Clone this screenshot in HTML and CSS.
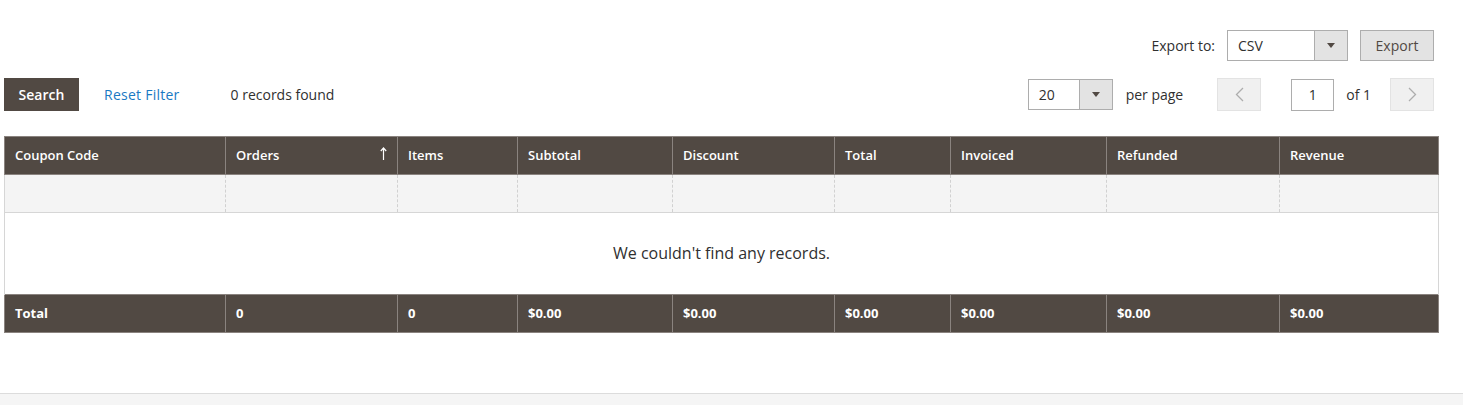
FILE: index.html
```html
<!DOCTYPE html>
<html>
<head>
<meta charset="utf-8">
<link rel="stylesheet" href="styles.css">
</head>
<body>
<div class="page">
  <div class="export-bar">
    <span class="export-label">Export to:</span>
    <div class="select select-csv">
      <span class="select-value">CSV</span>
      <span class="select-arrow"><svg width="8" height="5" viewBox="0 0 8 5"><path d="M0 0h8L4 5z" fill="#514943"/></svg></span>
    </div>
    <button class="btn-export">Export</button>
  </div>

  <div class="toolbar">
    <div class="toolbar-left">
      <button class="btn-search">Search</button>
      <a class="reset-link">Reset Filter</a>
      <span class="records">0 records found</span>
    </div>
    <div class="toolbar-right">
      <div class="select select-limit">
        <span class="select-value">20</span>
        <span class="select-arrow"><svg width="8" height="5" viewBox="0 0 8 5"><path d="M0 0h8L4 5z" fill="#514943"/></svg></span>
      </div>
      <span class="per-page">per page</span>
      <button class="pager-btn prev"><svg width="9" height="15" viewBox="0 0 9 15"><path d="M8 1L1.5 7.5 8 14" fill="none" stroke="#adadad" stroke-width="1.3"/></svg></button>
      <div class="page-input">1</div>
      <span class="of-pages">of 1</span>
      <button class="pager-btn next"><svg width="9" height="15" viewBox="0 0 9 15"><path d="M1 1l6.5 6.5L1 14" fill="none" stroke="#adadad" stroke-width="1.3"/></svg></button>
    </div>
  </div>

  <table class="grid">
    <colgroup>
      <col class="c1"><col class="c2"><col class="c3"><col class="c4"><col class="c5"><col class="c6"><col class="c7"><col class="c8"><col class="c9">
    </colgroup>
    <thead>
      <tr class="head">
        <th>Coupon Code</th>
        <th class="sorted">Orders<span class="sort-arrow"><svg width="7" height="13" viewBox="0 0 7 13"><path d="M3.5 1v12M0.8 4L3.5 1 6.2 4" fill="none" stroke="#ffffff" stroke-width="1.2"/></svg></span></th>
        <th>Items</th>
        <th>Subtotal</th>
        <th>Discount</th>
        <th>Total</th>
        <th>Invoiced</th>
        <th>Refunded</th>
        <th>Revenue</th>
      </tr>
      <tr class="filters">
        <td></td><td></td><td></td><td></td><td></td><td></td><td></td><td></td><td></td>
      </tr>
    </thead>
    <tbody>
      <tr class="empty">
        <td colspan="9">We couldn't find any records.</td>
      </tr>
    </tbody>
    <tfoot>
      <tr class="totals">
        <td>Total</td>
        <td>0</td>
        <td>0</td>
        <td>$0.00</td>
        <td>$0.00</td>
        <td>$0.00</td>
        <td>$0.00</td>
        <td>$0.00</td>
        <td>$0.00</td>
      </tr>
    </tfoot>
  </table>
</div>
<footer class="footer"></footer>
</body>
</html>
```

FILE: styles.css
```css
html, body {
  margin: 0;
  padding: 0;
  background: #ffffff;
}
body {
  font-family: "Open Sans", "Liberation Sans", sans-serif;
  color: #303030;
  font-size: 14px;
  width: 1463px;
  height: 405px;
  overflow: hidden;
}
.page {
  height: 393px;
  padding: 0 25px 0 4px;
  box-sizing: border-box;
}
button {
  font-family: inherit;
  cursor: pointer;
}

/* export bar */
.export-bar {
  display: flex;
  justify-content: flex-end;
  align-items: center;
  padding-top: 30px;
  padding-right: 4px;
  height: 31px;
  box-sizing: content-box;
}
.export-label {
  font-size: 14px;
  color: #303030;
  margin-right: 12px;
}
.select {
  display: flex;
  border: 1px solid #adadad;
  background: #fff;
  box-sizing: border-box;
}
.select-csv {
  width: 121px;
  height: 31px;
}
.select-value {
  flex: 1;
  display: flex;
  align-items: center;
  padding-left: 10px;
  font-size: 14px;
  color: #303030;
}
.select-arrow {
  width: 32px;
  background: #e3e3e3;
  border-left: 1px solid #adadad;
  display: flex;
  align-items: center;
  justify-content: center;
}
.btn-export {
  margin-left: 12px;
  width: 74px;
  height: 31px;
  background: #e3e3e3;
  border: 1px solid #adadad;
  color: #514943;
  font-size: 14px;
  padding: 0;
}

/* toolbar */
.toolbar {
  display: flex;
  justify-content: space-between;
  align-items: center;
  margin-top: 17px;
  height: 33px;
  padding-right: 4px;
}
.toolbar-left {
  display: flex;
  align-items: center;
}
.btn-search {
  width: 75px;
  height: 33px;
  background: #514943;
  border: 1px solid #514943;
  color: #ffffff;
  font-size: 14px;
  font-weight: 600;
  padding: 0;
}
.reset-link {
  margin-left: 25px;
  color: #1979c3;
  font-size: 14px;
  letter-spacing: 0.25px;
}
.records {
  margin-left: 51px;
  font-size: 14px;
  color: #303030;
}
.toolbar-right {
  display: flex;
  align-items: center;
}
.select-limit {
  width: 85px;
  height: 31px;
}
.per-page {
  margin-left: 13px;
  font-size: 14px;
}
.pager-btn {
  width: 44px;
  height: 33px;
  background: #f0f0f0;
  border: 1px solid #e3e3e3;
  padding: 0;
  display: flex;
  align-items: center;
  justify-content: center;
}
.pager-btn.prev {
  margin-left: 34px;
}
.page-input {
  margin-left: 30px;
  width: 43px;
  height: 32px;
  border: 1px solid #adadad;
  box-sizing: border-box;
  display: flex;
  align-items: center;
  justify-content: center;
  font-size: 14px;
}
.of-pages {
  margin-left: 12px;
  margin-right: 1px;
  font-size: 14px;
}
.pager-btn.next {
  margin-left: 18px;
}

/* grid */
.grid {
  margin-top: 25px;
  width: 1434px;
  table-layout: fixed;
  border-collapse: collapse;
  font-size: 13px;
}
.c1 { width: 221px; }
.c2 { width: 172px; }
.c3 { width: 120px; }
.c4 { width: 155px; }
.c5 { width: 162px; }
.c6 { width: 116px; }
.c7 { width: 156px; }
.c8 { width: 173px; }
.c9 { width: 159px; }

.head th {
  background: #514943;
  color: #ffffff;
  font-weight: 600;
  text-align: left;
  height: 38px;
  padding: 0 10px 2px;
  border: 1px solid #8a837f;
  box-sizing: border-box;
  vertical-align: middle;
}
.head th.sorted {
  position: relative;
}
.sort-arrow {
  position: absolute;
  right: 10px;
  top: 10px;
  line-height: 0;
}
.filters td {
  background: #f4f4f4;
  height: 37px;
  padding: 0;
  border-left: 1px dashed #d1d1d1;
  border-right: 1px dashed #d1d1d1;
  border-bottom: 1px solid #d6d6d6;
}
.filters td:first-child {
  border-left: 1px solid #d6d6d6;
}
.filters td:last-child {
  border-right: 1px solid #d6d6d6;
}
.empty td {
  height: 79px;
  text-align: center;
  font-size: 16px;
  color: #303030;
  border-left: 1px solid #d6d6d6;
  border-right: 1px solid #d6d6d6;
  padding: 0 0 2px;
}
.totals td {
  background: #514943;
  color: #ffffff;
  font-weight: 700;
  height: 35px;
  padding: 0 10px 2px;
  border: 1px solid #8a837f;
}

.footer {
  height: 12px;
  background: #f5f5f5;
  border-top: 1px solid #dcdcdc;
}
```
